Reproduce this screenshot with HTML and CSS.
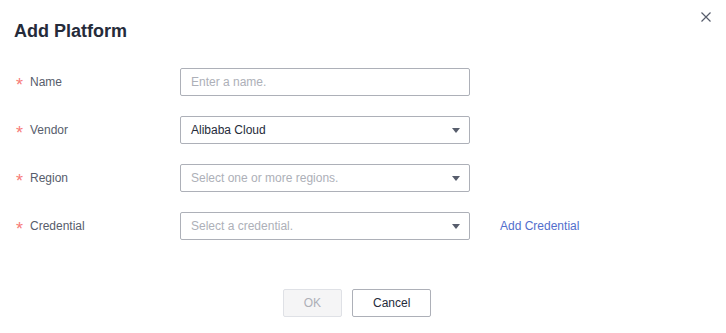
FILE: index.html
```html
<!DOCTYPE html>
<html lang="en">
<head>
    <meta charset="UTF-8">
    <meta name="viewport" content="width=device-width, initial-scale=1.0">
    <title>Add Platform</title>
    <link rel="stylesheet" href="styles.css">
</head>
<body>
    <div class="dialog">
        <div class="dialog-header">
            <h1 class="dialog-title">Add Platform</h1>
            <button class="close-btn" aria-label="Close">
                <svg width="10" height="10" viewBox="0 0 10 10">
                    <path d="M0.5 0.5 L9.5 9.5 M9.5 0.5 L0.5 9.5" stroke="#575d6c" stroke-width="1.2" fill="none"/>
                </svg>
            </button>
        </div>

        <div class="form">
            <div class="form-row">
                <label class="form-label"><span class="required">*</span>Name</label>
                <div class="field">
                    <input class="input" type="text" placeholder="Enter a name.">
                </div>
            </div>
            <div class="form-row">
                <label class="form-label"><span class="required">*</span>Vendor</label>
                <div class="field select">
                    <span class="select-value">Alibaba Cloud</span>
                    <span class="caret"></span>
                </div>
            </div>
            <div class="form-row">
                <label class="form-label"><span class="required">*</span>Region</label>
                <div class="field select">
                    <span class="select-placeholder">Select one or more regions.</span>
                    <span class="caret"></span>
                </div>
            </div>
            <div class="form-row">
                <label class="form-label"><span class="required">*</span>Credential</label>
                <div class="field select">
                    <span class="select-placeholder">Select a credential.</span>
                    <span class="caret"></span>
                </div>
                <a class="link" href="#">Add Credential</a>
            </div>
        </div>

        <div class="dialog-footer">
            <button class="btn btn-disabled" disabled>OK</button>
            <button class="btn">Cancel</button>
        </div>
    </div>
</body>
</html>
```

FILE: styles.css
```css
body {
    margin: 0;
    background-color: #fff;
    font-family: "Liberation Sans", Arial, sans-serif;
    font-size: 12px;
    color: #575d6c;
}
.dialog {
    width: 726px;
    height: 333px;
    box-sizing: border-box;
}
.dialog-header {
    display: flex;
    justify-content: space-between;
    align-items: flex-start;
    padding: 19px 15px 0 14px;
}
.dialog-title {
    margin: 0;
    font-size: 18px;
    line-height: 24px;
    font-weight: bold;
    color: #252b3a;
}
.close-btn {
    margin-top: -9px;
    padding: 0;
    border: none;
    background: none;
    width: 10px;
    height: 10px;
    cursor: pointer;
}
.form {
    display: flex;
    flex-direction: column;
    gap: 20px;
    padding-top: 25px;
}
.form-row {
    display: flex;
    align-items: center;
    height: 28px;
}
.form-label {
    width: 166px;
    padding-left: 16px;
    box-sizing: border-box;
    display: flex;
    align-items: center;
    color: #575d6c;
}
.required {
    color: #f77c78;
    font-size: 18px;
    line-height: 12px;
    width: 14px;
    padding-top: 5px;
}
.field {
    width: 290px;
    height: 28px;
    box-sizing: border-box;
    border: 1px solid #adb0b8;
    border-radius: 2px;
    margin-left: 14px;
}
.input {
    width: 100%;
    height: 100%;
    box-sizing: border-box;
    border: none;
    outline: none;
    padding: 0 10px;
    font-family: inherit;
    font-size: 12px;
    color: #252b3a;
    background: transparent;
}
.input::placeholder {
    color: #adb0b8;
}
.select {
    display: flex;
    align-items: center;
    justify-content: space-between;
    padding: 0 9px 0 10px;
}
.select-value {
    color: #252b3a;
}
.select-placeholder {
    color: #adb0b8;
}
.caret {
    width: 0;
    height: 0;
    border-left: 4px solid transparent;
    border-right: 4px solid transparent;
    border-top: 5px solid #575d6c;
}
.link {
    margin-left: 30px;
    color: #526ecc;
    text-decoration: none;
}
.dialog-footer {
    display: flex;
    justify-content: center;
    gap: 10px;
    padding: 49px 12px 0 0;
}
.btn {
    height: 28px;
    padding: 0 20px;
    border: 1px solid #adb0b8;
    border-radius: 2px;
    background-color: #fff;
    font-family: inherit;
    font-size: 12px;
    color: #252b3a;
    cursor: pointer;
}
.btn-disabled {
    background-color: #f5f5f6;
    border-color: #dfe1e6;
    color: #adb0b8;
    cursor: default;
}
```
